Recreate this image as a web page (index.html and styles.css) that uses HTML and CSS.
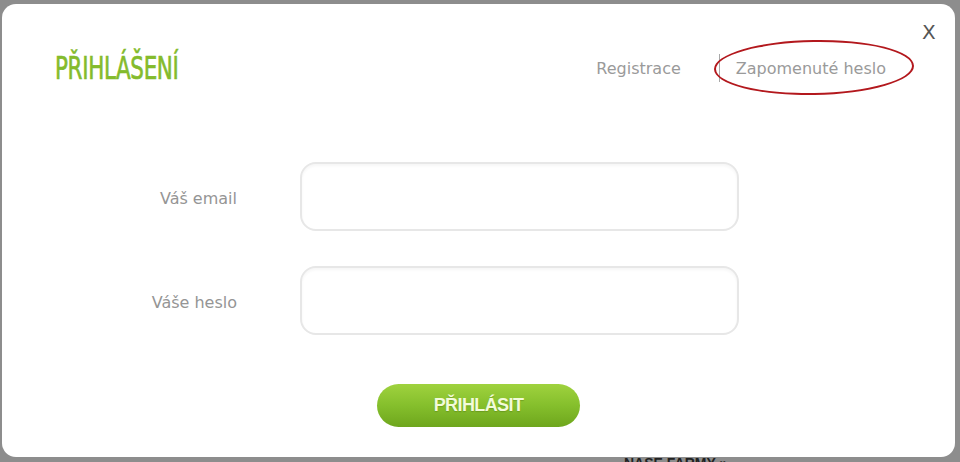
FILE: index.html
```html
<!DOCTYPE html>
<html lang="cs">
<head>
<meta charset="utf-8">
<title>Přihlášení</title>
<link rel="stylesheet" href="styles.css">
</head>
<body>
<div class="modal">
  <span class="close">X</span>
  <div class="header">
    <h1 class="title">PŘIHLÁŠENÍ</h1>
    <nav class="links">
      <a class="link">Registrace</a>
      <span class="sep"></span>
      <a class="link link-marked">Zapomenuté heslo<span class="ring"></span></a>
    </nav>
  </div>
  <form class="form">
    <label class="label">Váš email</label>
    <div class="input"></div>
    <label class="label">Váše heslo</label>
    <div class="input"></div>
  </form>
  <div class="actions">
    <button class="btn" type="button">PŘIHLÁSIT</button>
  </div>
</div>
<div class="behind">NAŠE FARMY »</div>
</body>
</html>
```
FILE: styles.css
```css
html, body {
  margin: 0;
  padding: 0;
  height: 462px;
  overflow: hidden;
}
body {
  background: #8d8d8d;
  font-family: "DejaVu Sans", Verdana, sans-serif;
}
.modal {
  position: relative;
  box-sizing: border-box;
  margin: 4px 5px 0 2px;
  height: 453px;
  background: #fff;
  border-radius: 14px;
}
.close {
  position: absolute;
  top: 16px;
  left: 920px;
  font-size: 20px;
  color: #555;
  line-height: 24px;
}
.header {
  height: 128px;
  display: flex;
  align-items: center;
  justify-content: space-between;
  padding: 0 69px 0 53px;
}
.title {
  margin: 0;
  font-family: "DejaVu Sans", sans-serif;
  font-weight: normal;
  font-size: 32px;
  color: #84bb2c;
  letter-spacing: -0.5px;
  -webkit-text-stroke: 0.7px #84bb2c;
  transform: scaleX(0.67);
  transform-origin: left center;
}
.links {
  display: flex;
  align-items: center;
}
.link {
  font-size: 16px;
  color: #9a9a9a;
}
.sep {
  width: 1px;
  height: 28px;
  background: #a8a8a8;
  margin: 0 16px 0 38px;
}
.link-marked {
  position: relative;
}
.ring {
  position: absolute;
  left: -22px;
  right: -28px;
  top: -19px;
  bottom: -17px;
  border: 2px solid #b3181d;
  border-radius: 50%;
  transform: rotate(-1deg);
}
.form {
  margin: 30px 0 0;
  display: grid;
  grid-template-columns: 235px 439px;
  grid-auto-rows: 69px;
  column-gap: 63px;
  row-gap: 35px;
}
.label {
  justify-self: end;
  align-self: center;
  font-size: 16px;
  color: #959595;
  margin-top: 3px;
}
.input {
  box-sizing: border-box;
  border: 2px solid #e7e7e7;
  border-radius: 16px;
  background: #fff;
  box-shadow: inset 0 2px 3px rgba(0, 0, 0, 0.04);
}
.actions {
  display: flex;
  justify-content: center;
  margin-top: 49px;
}
.btn {
  width: 203px;
  height: 43px;
  border: none;
  border-radius: 22px;
  background: linear-gradient(#9fd23e, #85bf2c 50%, #6ea61d);
  font-family: "Liberation Sans", Arial, sans-serif;
  font-weight: bold;
  font-size: 18px;
  letter-spacing: -0.6px;
  color: #f2fbd9;
  text-shadow: 0 1px 1px rgba(60, 90, 10, 0.3);
  padding: 0;
}
.behind {
  margin: -2px 0 0 624px;
  font-family: "Liberation Sans", Arial, sans-serif;
  font-weight: bold;
  font-size: 14px;
  line-height: 16px;
  color: #222;
}
```
